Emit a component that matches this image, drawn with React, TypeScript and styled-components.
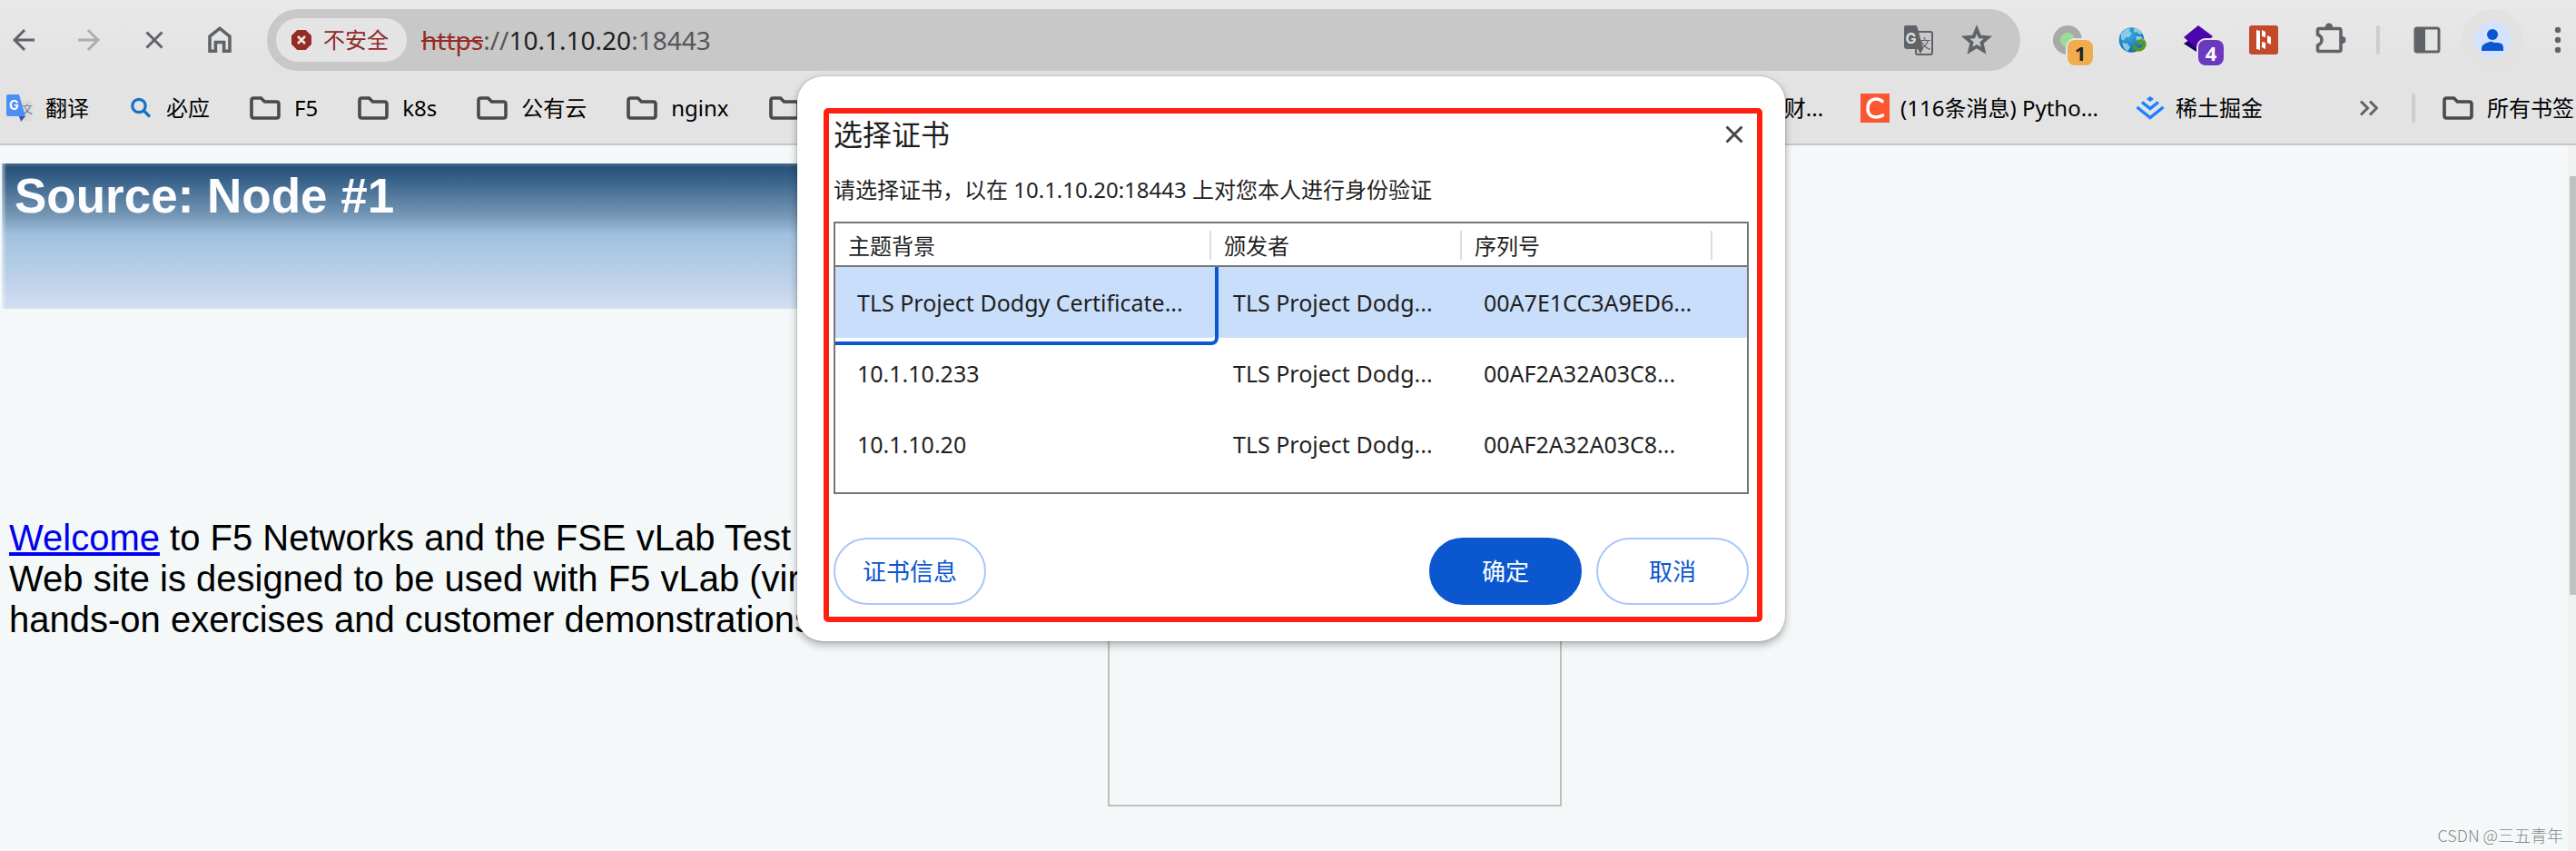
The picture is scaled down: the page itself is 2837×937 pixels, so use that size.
import React from "react";
import styled, { createGlobalStyle } from "styled-components";

const uiFont = `"Noto Sans", "Noto Sans CJK SC", sans-serif`;
const grey = "#5f6368";

const GlobalStyle = createGlobalStyle`
  *, *::before, *::after { box-sizing: border-box; }
  body { margin: 0; font-family: ${uiFont}; color: #1f1f1f; }
  button { font: inherit; border: 0; padding: 0; margin: 0; background: none; cursor: pointer; }
`;

const Browser = styled.div`
  position: relative;
  display: flex;
  flex-direction: column;
  min-height: 100vh;
  overflow: hidden;
`;

const Chrome = styled.header`
  background: linear-gradient(#e9e9e9, #e3e3e3 70px);
  border-bottom: 2px solid #c7c7c8;
`;

const Toolbar = styled.div`
  display: flex;
  align-items: center;
  gap: 32px;
  height: 88px;
  padding-left: 6px;
`;

const IconButton = styled.button<{ $faded?: boolean }>`
  position: relative;
  display: flex;
  flex: none;
  align-items: center;
  justify-content: center;
  width: 40px;
  height: 40px;
  color: ${grey};
  opacity: ${(p) => (p.$faded ? 0.42 : 1)};
`;

const Omnibox = styled.div`
  display: flex;
  flex: 1;
  align-items: center;
  min-width: 0;
  height: 68px;
  padding: 0 28px 0 10px;
  border-radius: 34px;
  background: #c8c8c8;
`;

const SecurityChip = styled.button`
  display: flex;
  flex: none;
  align-items: center;
  gap: 12px;
  height: 48px;
  padding: 0 20px 0 16px;
  border-radius: 24px;
  background: #e4e4e4;
  color: #8f2a26;
  font-size: 24px;
  line-height: 32px;
`;

const Address = styled.div`
  flex: 1;
  min-width: 0;
  margin-left: 16px;
  color: #55565a;
  font-size: 28px;
  line-height: 40px;
  white-space: nowrap;
  s { color: #962b26; }
  strong { color: #1f1f1f; font-weight: 400; }
`;

const OmniActions = styled.div`
  display: flex;
  gap: 24px;
`;

const Divider = styled.span`
  flex: none;
  width: 4px;
  height: 32px;
  border-radius: 2px;
  background: #cdcdcd;
`;

const Badge = styled.span<{ $bg: string; $fg: string }>`
  position: absolute;
  left: 20px;
  top: 20px;
  width: 28px;
  height: 28px;
  border-radius: 8px;
  background: ${(p) => p.$bg};
  box-shadow: 0 0 0 2px #e5e5e5;
  color: ${(p) => p.$fg};
  font-size: 22px;
  font-weight: 700;
  line-height: 28px;
  text-align: center;
`;

const BookmarkBar = styled.nav`
  display: flex;
  justify-content: space-between;
  height: 70px;
  padding: 0 2px 9px 6px;
`;

const BookmarkGroup = styled.div`
  display: flex;
  flex: none;
  align-items: center;
  gap: 41px;
`;

const Bookmark = styled.a`
  display: flex;
  align-items: center;
  gap: 12px;
  color: #000;
  font-size: 24px;
  line-height: 32px;
  text-decoration: none;
  white-space: nowrap;
`;

const BookmarkEnd = styled.div`
  display: flex;
  align-items: center;
  gap: 27px;
  margin-left: 56px;
`;

const Viewport = styled.div`
  display: flex;
  flex: 1;
`;

const Page = styled.main`
  flex: 1;
  min-width: 0;
  padding: 20px 0 0 2px;
  background: #f4f8f9;
  font-family: "Liberation Sans", Arial, sans-serif;
`;

const Banner = styled.div`
  max-width: 1718px;
  height: 160px;
  padding: 5px 14px;
  background:
    linear-gradient(90deg, rgba(244, 248, 249, 0.6), rgba(244, 248, 249, 0) 5px),
    linear-gradient(#4a6f92 0, #2b5379 4px, #2f5a83 12px, #7698b6 58px, #a1c0df 78px, #aac8e2 96px, #bbcfe9 124px, #d2dff0 160px);
`;

const Source = styled.h1`
  margin: 0;
  color: #fdfdff;
  font-size: 53px;
  font-weight: 700;
  line-height: 62px;
  white-space: nowrap;
`;

const Columns = styled.div`
  display: flex;
  max-width: 1718px;
  margin-top: 220px;
  padding-left: 8px;
`;

const Intro = styled.p`
  flex: 1;
  margin: 0;
  padding-top: 10px;
  color: #000;
  font-size: 40px;
  line-height: 45px;
  white-space: nowrap;
  a { color: #00e; }
`;

const SideBox = styled.div`
  flex: none;
  width: 500px;
  height: 328px;
  border: 2px solid #c0c0c0;
`;

const ScrollTrack = styled.div`
  flex: none;
  width: 9px;
  padding: 34px 0 0 2px;
  background: #f1f1f1;
`;

const ScrollThumb = styled.div`
  height: 461px;
  background: #c1c1c1;
`;

const Watermark = styled.span`
  position: absolute;
  right: 14px;
  bottom: 6px;
  color: #85888a;
  font-family: "Noto Sans CJK SC", sans-serif;
  font-size: 18px;
  font-weight: 300;
  line-height: 24px;
`;

const Dialog = styled.section`
  position: absolute;
  top: 84px;
  left: 7px;
  right: 0;
  width: 100%;
  max-width: 1088px;
  margin: 0 auto;
  padding: 35px 25px 21px 29px;
  border-radius: 28px;
  background: #fff;
  box-shadow: 0 0 2px rgba(0, 0, 0, 0.3), 0 4px 10px rgba(0, 0, 0, 0.3);
`;

const Highlight = styled.div`
  padding: 3px 9px 13px 5px;
  border: 6px solid #ff2010;
  border-radius: 5px;
`;

const DialogHead = styled.div`
  display: flex;
  align-items: center;
  justify-content: space-between;
  height: 40px;
  margin-bottom: 25px;
`;

const DialogTitle = styled.h2`
  margin: 0;
  font-size: 32px;
  font-weight: 400;
  line-height: 40px;
`;

const CloseButton = styled.button`
  display: flex;
  align-items: center;
  justify-content: center;
  width: 32px;
  height: 32px;
  color: #474747;
`;

const Prompt = styled.p`
  margin: 0 0 19px;
  font-size: 24px;
  line-height: 32px;
`;

const TableFrame = styled.div`
  padding-bottom: 14px;
  border: 2px solid #767676;
`;

const CertTable = styled.table`
  width: 100%;
  border-spacing: 0;
  table-layout: fixed;
  font-size: 24px;
  line-height: 32px;
  th, td { padding: 0; text-align: left; font-weight: 400; white-space: nowrap; }
  th { padding: 8px 0 6px; border-bottom: 2px solid #767676; }
`;

const HeadLabel = styled.div`
  height: 32px;
  padding-left: 14px;
  border-right: 2px solid #dadce0;
  line-height: 34px;
`;

const CertRow = styled.tr<{ $selected: boolean }>`
  height: 78px;
  background: ${(p) => (p.$selected ? "#c9defb" : "transparent")};
  font-size: 25px;
  td { padding-left: 24px; }
`;

const FocusCell = styled.td<{ $focused: boolean }>`
  position: relative;
  &::after {
    content: "";
    display: ${(p) => (p.$focused ? "block" : "none")};
    position: absolute;
    inset: 0 -8px -8px 0;
    border: solid #0b57d0;
    border-width: 0 4px 4px 0;
    border-radius: 0 0 8px 0;
    box-shadow: inset 0 -4px #fff;
  }
`;

const Actions = styled.div`
  display: flex;
  gap: 16px;
  margin-top: 48px;
`;

const PillButton = styled.button<{ $primary?: boolean; $start?: boolean }>`
  width: 168px;
  height: 74px;
  margin-right: ${(p) => (p.$start ? "auto" : "0")};
  border: 2px solid ${(p) => (p.$primary ? "#0b57d0" : "#a8c7fa")};
  border-radius: 37px;
  background: ${(p) => (p.$primary ? "#0b57d0" : "#fff")};
  color: ${(p) => (p.$primary ? "#fff" : "#0b57d0")};
  font-size: 26px;
  line-height: 36px;
`;

const Arrow = ({ flip }: { flip?: boolean }) => (
  <svg width="36" height="36" viewBox="0 0 24 24" fill="currentColor">
    <path
      transform={flip ? "matrix(-1 0 0 1 24 0)" : undefined}
      d="M20 11H7.83l5.59-5.59L12 4l-8 8 8 8 1.41-1.41L7.83 13H20z"
    />
  </svg>
);

const Cross = ({ size, stroke }: { size: number; stroke: number }) => (
  <svg width={size} height={size} viewBox={`0 0 ${size} ${size}`} fill="none" stroke="currentColor" strokeWidth={stroke}>
    <path d={`M1.5 1.5L${size - 1.5} ${size - 1.5}M${size - 1.5} 1.5L1.5 ${size - 1.5}`} />
  </svg>
);

const HomeIcon = () => (
  <svg width="40" height="40" viewBox="0 0 40 40" fill="none" stroke="currentColor" strokeWidth="3.6">
    <path d="M9 32.2V16L20 7.2 31 16v16.200H24.600V22.500H15.400V32.200z" />
  </svg>
);

const AlertIcon = () => (
  <svg width="24" height="24" viewBox="0 0 24 24">
    <path d="M7.300 1h9.400L23 7.300v9.400L16.700 23H7.300L1 16.700V7.300z" fill="#962a25" />
    <path d="M8 8l8 8M16 8l-8 8" stroke="#f1e4e4" strokeWidth="2.600" />
  </svg>
);

const PageTranslateIcon = () => (
  <svg width="36" height="36" viewBox="0 0 36 36">
    <rect x="15" y="9" width="18" height="25" rx="2" fill="none" stroke={grey} strokeWidth="2" />
    <path d="M3 2h12q1 0 1.500 1.500L23 28l-3 5-3-5H5q-3 0-3-3V5q0-3 1-3z" fill={grey} />
    <text x="3.500" y="22" fontSize="16" fontWeight="700" fontFamily="Inter, sans-serif" fill="#ddd">G</text>
    <text x="17.500" y="27" fontSize="14" fontFamily="Noto Sans CJK SC, sans-serif" fill={grey}>文</text>
  </svg>
);

const StarIcon = () => (
  <svg width="40" height="40" viewBox="0 0 40 40">
    <path
      fill="none"
      stroke={grey}
      strokeWidth="3.800"
      d="M20 8.200l3.400 8.300 8.900.7-6.800 5.800 2.100 8.700L20 27.100l-7.600 4.600 2.100-8.700-6.800-5.800 8.900-.7z"
    />
  </svg>
);

const RingIcon = () => (
  <svg width="32" height="32" viewBox="0 0 32 32">
    <circle cx="16" cy="16" r="16" fill="#a9a9a9" />
    <circle cx="16" cy="16" r="8" fill="#99dd99" />
  </svg>
);

const GlobeIcon = () => (
  <svg width="32" height="32" viewBox="0 0 32 32">
    <defs>
      <radialGradient id="sea" cx="0.4" cy="0.3" r="0.7">
        <stop offset="0" stopColor="#3fa9dc" />
        <stop offset="1" stopColor="#0c6fae" />
      </radialGradient>
    </defs>
    <circle cx="14.500" cy="16" r="13.800" fill="url(#sea)" />
    <path d="M3 9l5-5 5-1-1 4 3 1-3 5-4 0-2 4-3-2zM17 3l5 1 4 5-3 1-3-3-3 1zM19 12l6 0 3 4-3 5-4-2zM4 19l6 1 3 4-3 5-4-4z" fill="#9bd3ef" opacity=".85" />
    <path d="M27 16.500q3.500 4 .5 8-4 4-8.500 1" fill="none" stroke="#5b961d" strokeWidth="3.600" />
    <path d="M27 14.500l-8 2.500 5.500 5.500zM15.500 21.500l1 6.500 5-4.500z" fill="#5b961d" />
  </svg>
);

const LayersIcon = () => (
  <svg width="32" height="32" viewBox="0 0 32 32">
    <path d="M0 20l6-4 14 14-6-1z" fill="#1c0068" />
    <path d="M16 0l16 12-16 15L0 13z" fill="#4a06ad" />
  </svg>
);

const BarsIcon = () => (
  <svg width="32" height="32" viewBox="0 0 32 32">
    <rect width="32" height="32" rx="3" fill="#c24a2b" />
    <path d="M8 5l4 1v21l-4-1zM14 5l4 2v6l-4-1zM14 18l4 1v7l-4-2zM20 11l4 2v8l-4-2z" fill="#fff" />
  </svg>
);

const PuzzleIcon = () => (
  <svg width="40" height="40" viewBox="0 0 40 40">
    <path
      d="M9 7.500H31q2 0 2 2V30.500q0 2-2 2H9q-1.500 0-1.500-2V26q4.500-2 4.500-6t-4.500-6V9.500q0-2 1.500-2z"
      fill="none"
      stroke={grey}
      strokeWidth="3.600"
    />
    <path d="M15.700 6q.5-4.500 4.300-4.500T24.300 6zM34 15.700q4.500.5 4.500 4.300T34 24.300z" fill={grey} />
  </svg>
);

const PanelIcon = () => (
  <svg width="30" height="30" viewBox="0 0 30 30">
    <rect x="2" y="2" width="26" height="26" rx="2" fill="none" stroke={grey} strokeWidth="3" />
    <path d="M2 2h11v26H2z" fill={grey} />
  </svg>
);

const AvatarSvg = styled.svg`
  flex: none;
`;

const AvatarIcon = () => (
  <AvatarSvg width="68" height="68" viewBox="0 0 68 68">
    <circle cx="34" cy="34" r="34" fill="#e2e2e2" />
    <circle cx="34" cy="34" r="20" fill="#d3e3fd" />
    <circle cx="34" cy="28" r="6" fill="#0b57d0" />
    <path d="M22 46v-3q0-4 6-6t6-1 6 1 6 6v3z" fill="#0b57d0" />
  </AvatarSvg>
);

const DotsIcon = () => (
  <svg width="8" height="30" viewBox="0 0 8 30" fill={grey}>
    <circle cx="4" cy="4" r="3.200" />
    <circle cx="4" cy="15" r="3.200" />
    <circle cx="4" cy="26" r="3.200" />
  </svg>
);

const FolderIcon = () => (
  <svg width="40" height="40" viewBox="0 0 40 40">
    <path
      d="M7.500 9H15.500l4 4H32.500q2.500 0 2.500 2.500V28.500q0 2.500-2.500 2.500H7.500Q5 31 5 28.500V11.500Q5 9 7.500 9z"
      fill="none"
      stroke="#4a4a4a"
      strokeWidth="3.600"
    />
  </svg>
);

const TranslateFavicon = () => (
  <svg width="32" height="32" viewBox="0 0 32 32">
    <path d="M16 7h13v24H19z" fill="#dcdcdc" />
    <text x="18" y="22" fontSize="12" fontFamily="Noto Sans CJK SC, sans-serif" fill="#607d8b">文</text>
    <path d="M15 25h7l-5 6z" fill="#3f51b5" />
    <path d="M3 1h12l7 24H3q-2 0-2-2V3q0-2 2-2z" fill="#4c8df6" />
    <text x="4" y="18" fontSize="14" fontWeight="700" fontFamily="Inter, sans-serif" fill="#fff">G</text>
  </svg>
);

const SearchFavicon = () => (
  <svg width="32" height="32" viewBox="0 0 32 32" fill="none" stroke="#1474c4" strokeWidth="3.200">
    <circle cx="14" cy="13.500" r="7.200" />
    <path d="M19 18.500l7 7" />
  </svg>
);

const CFavicon = () => (
  <svg width="32" height="32" viewBox="0 0 32 32">
    <rect width="32" height="32" fill="#fc5531" />
    <path d="M24 8.500Q21 6 17.500 6C11 6 8 10.500 8 16.500c0 6 3.500 9.500 9 9.500q4 0 7.500-2" fill="none" stroke="#fff" strokeWidth="3.600" strokeLinecap="round" />
  </svg>
);

const JuejinFavicon = () => (
  <svg width="32" height="32" viewBox="0 0 32 32">
    <path d="M16 3l4 3-4 3-4-3z" fill="#1e80ff" />
    <path d="M7 9.500l9 7 9-7M1.500 15L16 26.500 30.500 15" fill="none" stroke="#1e80ff" strokeWidth="3.400" />
  </svg>
);

const ChevronsIcon = () => (
  <svg width="20" height="18" viewBox="0 0 20 18" fill="none" stroke={grey} strokeWidth="3">
    <path d="M1 1.500L8.500 9 1 16.500M11 1.500L18.500 9 11 16.500" />
  </svg>
);

const folders = ["F5", "k8s", "公有云", "nginx", ""];

const certificates = [
  { subject: "TLS Project Dodgy Certificate...", issuer: "TLS Project Dodg...", serial: "00A7E1CC3A9ED6..." },
  { subject: "10.1.10.233", issuer: "TLS Project Dodg...", serial: "00AF2A32A03C8..." },
  { subject: "10.1.10.20", issuer: "TLS Project Dodg...", serial: "00AF2A32A03C8..." },
];

export default function App() {
  const [selected, setSelected] = React.useState(0);
  return (
    <>
      <GlobalStyle />
      <Browser>
        <Chrome>
          <Toolbar>
            <IconButton aria-label="后退"><Arrow /></IconButton>
            <IconButton aria-label="前进" $faded><Arrow flip /></IconButton>
            <IconButton aria-label="停止"><Cross size={20} stroke={3} /></IconButton>
            <IconButton aria-label="主页"><HomeIcon /></IconButton>
            <Omnibox>
              <SecurityChip><AlertIcon />不安全</SecurityChip>
              <Address><s>https</s>://<strong>10.1.10.20</strong>:18443</Address>
              <OmniActions>
                <IconButton aria-label="翻译此页"><PageTranslateIcon /></IconButton>
                <IconButton aria-label="加入书签"><StarIcon /></IconButton>
              </OmniActions>
            </Omnibox>
            <IconButton aria-label="扩展 1"><RingIcon /><Badge $bg="#f0ad4e" $fg="#222">1</Badge></IconButton>
            <IconButton aria-label="扩展 2"><GlobeIcon /></IconButton>
            <IconButton aria-label="扩展 3"><LayersIcon /><Badge $bg="#6c38c0" $fg="#fff">4</Badge></IconButton>
            <IconButton aria-label="扩展 4"><BarsIcon /></IconButton>
            <IconButton aria-label="扩展程序"><PuzzleIcon /></IconButton>
            <Divider />
            <IconButton aria-label="侧边栏"><PanelIcon /></IconButton>
            <IconButton aria-label="个人资料"><AvatarIcon /></IconButton>
            <IconButton aria-label="菜单"><DotsIcon /></IconButton>
          </Toolbar>
          <BookmarkBar>
            <BookmarkGroup>
              <Bookmark href="#"><TranslateFavicon />翻译</Bookmark>
              <Bookmark href="#"><SearchFavicon />必应</Bookmark>
              {folders.map((name) => (
                <Bookmark href="#" key={name}><FolderIcon />{name}</Bookmark>
              ))}
            </BookmarkGroup>
            <BookmarkGroup>
              <Bookmark href="#">财...</Bookmark>
              <Bookmark href="#"><CFavicon />(116条消息) Pytho...</Bookmark>
              <Bookmark href="#"><JuejinFavicon />稀土掘金</Bookmark>
              <BookmarkEnd>
                <IconButton aria-label="更多书签"><ChevronsIcon /></IconButton>
                <Divider />
                <Bookmark href="#"><FolderIcon />所有书签</Bookmark>
              </BookmarkEnd>
            </BookmarkGroup>
          </BookmarkBar>
        </Chrome>

        <Viewport>
          <Page>
            <Banner><Source>Source: Node #1</Source></Banner>
            <Columns>
              <Intro>
                <a href="#">Welcome</a> to F5 Networks and the FSE vLab Test<br />
                Web site is designed to be used with F5 vLab (virtual<br />
                hands-on exercises and customer demonstrations
              </Intro>
              <SideBox />
            </Columns>
          </Page>
          <ScrollTrack><ScrollThumb /></ScrollTrack>
        </Viewport>

        <Dialog role="dialog" aria-labelledby="dialog-title">
          <Highlight>
            <DialogHead>
              <DialogTitle id="dialog-title">选择证书</DialogTitle>
              <CloseButton aria-label="关闭"><Cross size={20} stroke={3} /></CloseButton>
            </DialogHead>
            <Prompt>请选择证书，以在 10.1.10.20:18443 上对您本人进行身份验证</Prompt>
            <TableFrame>
              <CertTable>
                <colgroup>
                  <col width="414" />
                  <col width="276" />
                  <col width="276" />
                  <col />
                </colgroup>
                <thead>
                  <tr>
                    <th><HeadLabel>主题背景</HeadLabel></th>
                    <th><HeadLabel>颁发者</HeadLabel></th>
                    <th><HeadLabel>序列号</HeadLabel></th>
                    <th />
                  </tr>
                </thead>
                <tbody>
                  {certificates.map((cert, i) => (
                    <CertRow key={cert.subject} $selected={i === selected} onClick={() => setSelected(i)}>
                      <FocusCell $focused={i === selected}>{cert.subject}</FocusCell>
                      <td>{cert.issuer}</td>
                      <td>{cert.serial}</td>
                      <td />
                    </CertRow>
                  ))}
                </tbody>
              </CertTable>
            </TableFrame>
            <Actions>
              <PillButton $start>证书信息</PillButton>
              <PillButton $primary>确定</PillButton>
              <PillButton>取消</PillButton>
            </Actions>
          </Highlight>
        </Dialog>
        <Watermark>CSDN @三五青年</Watermark>
      </Browser>
    </>
  );
}
